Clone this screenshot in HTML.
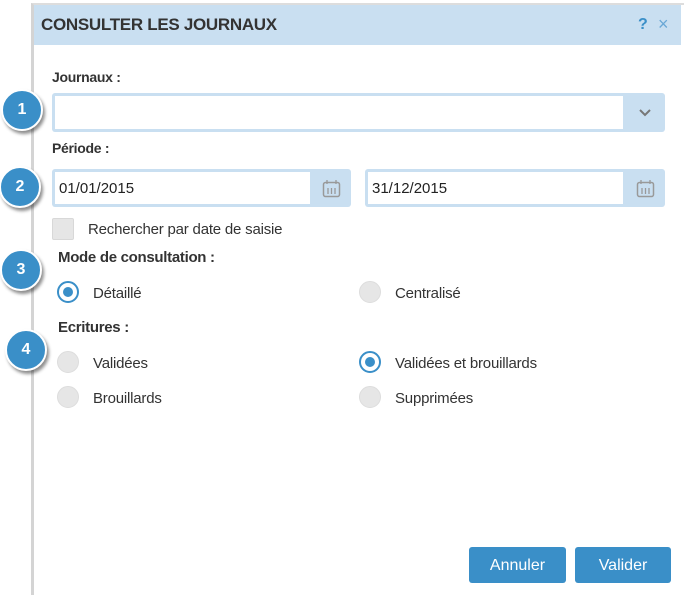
<!DOCTYPE html>
<html><head><style>
body{margin:0;width:684px;height:586px;background:#fff;font-family:"Liberation Sans",sans-serif;color:#333;position:relative;overflow:hidden}
.a{position:absolute}
.dlg{left:31px;top:3px;width:650px;height:590px;border-left:3px solid #d4d4d4;border-top:2px solid #ddd;border-right:2px solid #ddd}
.hdr{left:34px;top:5px;width:647px;height:40px;background:#c9dff1}
.lbl{font-weight:bold;font-size:14px;color:#333;letter-spacing:-0.3px}
.box{background:#c9dff1;border-radius:3px}
.in{position:absolute;left:3px;top:3px;bottom:3px;background:#fff;font-size:15px;line-height:34px;padding-left:4px;color:#222}
.rad{width:22px;height:22px;border-radius:50%;background:#e6e6e6;border:1px solid #ddd;box-sizing:border-box}
.rad.on{background:#fff;border:2px solid #3a8fc8}
.rad.on:after{content:"";position:absolute;left:4px;top:4px;width:10px;height:10px;border-radius:50%;background:#3a8fc8}
.t{font-size:15px;color:#333;letter-spacing:-0.2px}
.btn{background:#3a8fc8;color:#fff;font-size:16px;text-align:center;line-height:38px;border-radius:3px;height:36px}
.bdg{width:38px;height:38px;border-radius:50%;background:#3a8fc8;color:#fff;font-weight:bold;font-size:16px;text-align:center;line-height:38px;border:2px solid #fff;box-shadow:2px 3px 3px rgba(0,0,0,.45)}
</style></head><body>
<div class="a dlg"></div>
<div class="a hdr"></div>
<div class="a" style="left:41px;top:15px;font-size:17px;font-weight:bold;color:#333;letter-spacing:-0.3px">CONSULTER LES JOURNAUX</div>
<div class="a" style="left:638px;top:16px;font-size:16px;font-weight:bold;color:#3a8fc8">?</div>
<div class="a" style="left:658px;top:14px;font-size:18px;color:#6aa8d6">×</div>
<div class="a lbl" style="left:52px;top:69px">Journaux :</div>
<div class="a box" style="left:52px;top:93px;width:613px;height:39px"><div class="in" style="right:42px"></div>
<svg class="a" style="left:586px;top:15px" width="14" height="10"><path d="M2 2l5 5 5-5" stroke="#777" stroke-width="2" fill="none"/></svg></div>
<div class="a lbl" style="left:52px;top:140px">Période :</div>
<div class="a box" style="left:52px;top:169px;width:299px;height:38px"><div class="in" style="right:41px">01/01/2015</div>
<svg class="a" style="left:270px;top:10px" width="19" height="19"><rect x="1.5" y="3.5" width="16" height="14" rx="2" fill="none" stroke="#999" stroke-width="1.5"/><path d="M5 1v4M14 1v4M6 9v6M9.5 9v6M13 9v6" stroke="#999" stroke-width="1.3"/></svg></div>
<div class="a box" style="left:365px;top:169px;width:300px;height:38px"><div class="in" style="right:42px">31/12/2015</div>
<svg class="a" style="left:271px;top:10px" width="19" height="19"><rect x="1.5" y="3.5" width="16" height="14" rx="2" fill="none" stroke="#999" stroke-width="1.5"/><path d="M5 1v4M14 1v4M6 9v6M9.5 9v6M13 9v6" stroke="#999" stroke-width="1.3"/></svg></div>
<div class="a" style="left:52px;top:218px;width:22px;height:22px;background:#e6e6e6;border:1px solid #d8d8d8;box-sizing:border-box;border-radius:2px"></div>
<div class="a t" style="left:88px;top:221px">Rechercher par date de saisie</div>
<div class="a lbl" style="left:58px;top:249px;font-size:15px">Mode de consultation :</div>
<div class="a rad on" style="left:57px;top:281px"></div><div class="a t" style="left:93px;top:285px">Détaillé</div>
<div class="a rad" style="left:359px;top:281px"></div><div class="a t" style="left:395px;top:285px">Centralisé</div>
<div class="a lbl" style="left:58px;top:319px;font-size:15px">Ecritures :</div>
<div class="a rad" style="left:57px;top:351px"></div><div class="a t" style="left:93px;top:355px">Validées</div>
<div class="a rad on" style="left:359px;top:351px"></div><div class="a t" style="left:395px;top:355px">Validées et brouillards</div>
<div class="a rad" style="left:57px;top:386px"></div><div class="a t" style="left:93px;top:390px">Brouillards</div>
<div class="a rad" style="left:359px;top:386px"></div><div class="a t" style="left:395px;top:390px">Supprimées</div>
<div class="a btn" style="left:469px;top:547px;width:97px">Annuler</div>
<div class="a btn" style="left:575px;top:547px;width:96px">Valider</div>
<div class="a bdg" style="left:1px;top:89px">1</div>
<div class="a bdg" style="left:-1px;top:166px">2</div>
<div class="a bdg" style="left:0px;top:249px">3</div>
<div class="a bdg" style="left:5px;top:329px">4</div>
</body></html>
